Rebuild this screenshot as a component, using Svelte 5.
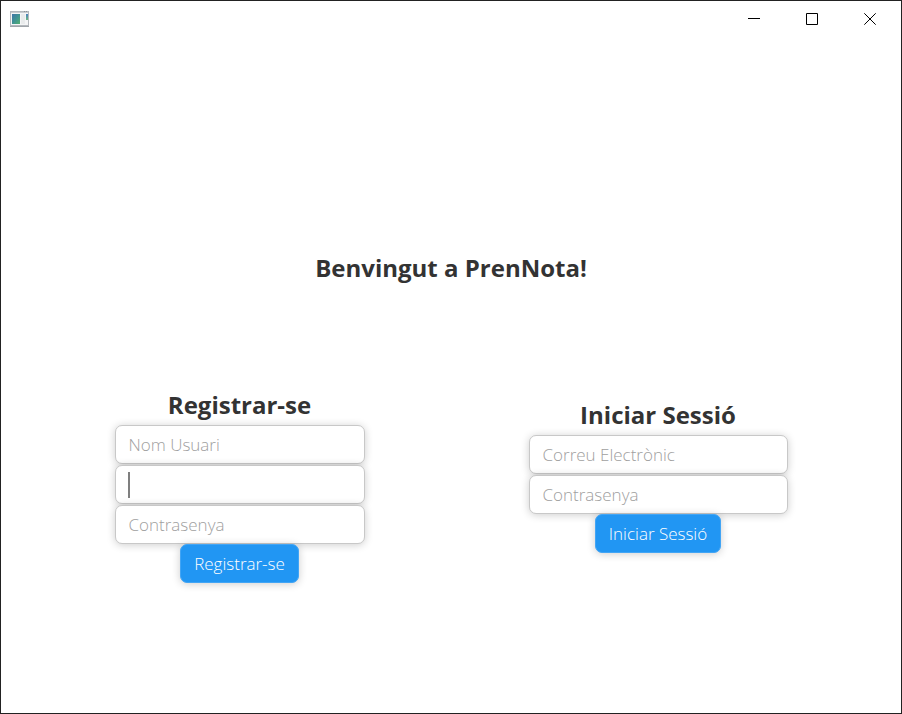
<script>
  const forms = [
    {
      id: 'register',
      title: 'Registrar-se',
      action: 'Registrar-se',
      fields: [
        { name: 'username', type: 'text', label: 'Nom Usuari' },
        { name: 'email', type: 'email', label: 'Correu Electrònic', active: true },
        { name: 'password', type: 'password', label: 'Contrasenya' }
      ]
    },
    {
      id: 'login',
      title: 'Iniciar Sessió',
      action: 'Iniciar Sessió',
      fields: [
        { name: 'email', type: 'email', label: 'Correu Electrònic' },
        { name: 'password', type: 'password', label: 'Contrasenya' }
      ]
    }
  ];
</script>

<div class="window">
  <header class="titlebar">
    <svg class="app-icon" width="20" height="17" viewBox="0 0 20 17" aria-hidden="true">
      <defs>
        <linearGradient id="pane" x1="0" y1="0" x2="1" y2="1">
          <stop offset="0" stop-color="#3f74a8" />
          <stop offset="0.5" stop-color="#3f9393" />
          <stop offset="1" stop-color="#55b070" />
        </linearGradient>
        <linearGradient id="strip" x1="0" y1="0" x2="0" y2="1">
          <stop offset="0" stop-color="#4a7fc0" />
          <stop offset="1" stop-color="#6cba80" />
        </linearGradient>
      </defs>
      <rect x="0" y="0" width="19" height="16" fill="#b4b8bd" />
      <rect x="0" y="15" width="19" height="1" fill="#a0a5aa" />
      <rect x="1" y="1" width="17" height="1" fill="#c9ccd0" />
      <rect x="1" y="2" width="17" height="12" fill="#f4f5f6" />
      <rect x="2" y="3" width="8" height="10" fill="url(#pane)" />
      <rect x="11" y="3" width="4" height="10" fill="#e9ebec" />
      <rect x="16" y="3" width="2" height="6" fill="url(#strip)" />
      <rect x="14" y="0" width="1" height="1" fill="#8d9298" />
      <rect x="16" y="0" width="1" height="1" fill="#8d9298" />
    </svg>
    <div class="controls">
      <button type="button" aria-label="Minimitza">
        <svg width="12" height="12" viewBox="0 0 12 12"><path d="M0 5.5H12" /></svg>
      </button>
      <button type="button" aria-label="Maximitza">
        <svg width="12" height="12" viewBox="0 0 12 12"><path d="M.5 .5H11.5V11.5H.5Z" /></svg>
      </button>
      <button type="button" aria-label="Tanca">
        <svg width="12" height="12" viewBox="0 0 12 12"><path d="M.3 .3L11.7 11.7M11.7 .3L.3 11.7" /></svg>
      </button>
    </div>
  </header>

  <main>
    <h1>Benvingut a PrenNota!</h1>
    <div class="forms">
      {#each forms as form (form.id)}
        <form class={form.id} onsubmit={(e) => e.preventDefault()}>
          <h2>{form.title}</h2>
          <div class="fields">
            {#each form.fields as field (field.name)}
              <div class="field">
                <input
                  type={field.type}
                  name={field.name}
                  aria-label={field.label}
                  placeholder={field.active ? '' : field.label}
                />
                {#if field.active}<span class="caret"></span>{/if}
              </div>
            {/each}
          </div>
          <button type="submit">{form.action}</button>
        </form>
      {/each}
    </div>
  </main>
</div>

<style>
  .window {
    box-sizing: border-box;
    min-height: 100vh;
    display: flex;
    flex-direction: column;
    border: 1px solid #222;
    background: #fff;
    color: #333;
    font-family: 'Open Sans', 'Noto Sans', sans-serif;
  }

  .titlebar {
    display: flex;
    justify-content: space-between;
    align-items: center;
    height: 36px;
    padding: 0 2px 0 9px;
  }

  .controls {
    display: flex;
    height: 100%;
  }

  .controls button {
    display: flex;
    align-items: center;
    justify-content: center;
    width: 58px;
    padding: 0;
    border: 0;
    background: none;
  }

  .controls path {
    fill: none;
    stroke: #000;
    stroke-width: 1;
  }

  main {
    display: flex;
    flex-direction: column;
    align-items: center;
    gap: 104px;
    padding: 30vh 16px 40px;
  }

  h1,
  h2 {
    margin: 0;
    font-size: 24px;
    line-height: 34px;
    font-weight: 700;
    text-align: center;
  }

  h2 {
    margin-bottom: 4px;
    line-height: 32px;
  }

  .forms {
    display: flex;
    flex-wrap: wrap;
    justify-content: center;
    align-items: flex-start;
    gap: 32px 164px;
  }

  form {
    display: flex;
    flex-direction: column;
    align-items: center;
    width: 250px;
  }

  .login {
    width: 259px;
    padding-top: 10px;
  }

  .fields {
    display: flex;
    flex-direction: column;
    gap: 1px;
    width: 100%;
  }

  .field {
    position: relative;
  }

  input,
  form button {
    box-sizing: border-box;
    display: block;
    height: 39px;
    padding: 0 13px;
    border: 1px solid #c8c8c8;
    border-radius: 7px;
    font: 300 17px/24px 'Open Sans', 'Noto Sans', sans-serif;
    box-shadow: 0 1px 8px rgba(0, 0, 0, 0.2);
  }

  input {
    width: 100%;
    background: #fff;
    color: #333;
    outline: 0;
  }

  input::placeholder {
    color: #a0a0a0;
    opacity: 1;
  }

  form button {
    position: relative;
    border-color: #42a5f5;
    background: #2196f3;
    color: #fff;
  }

  .caret {
    position: absolute;
    top: 7px;
    left: 13px;
    width: 2px;
    height: 26px;
    background: #7f7f7f;
  }
</style>
